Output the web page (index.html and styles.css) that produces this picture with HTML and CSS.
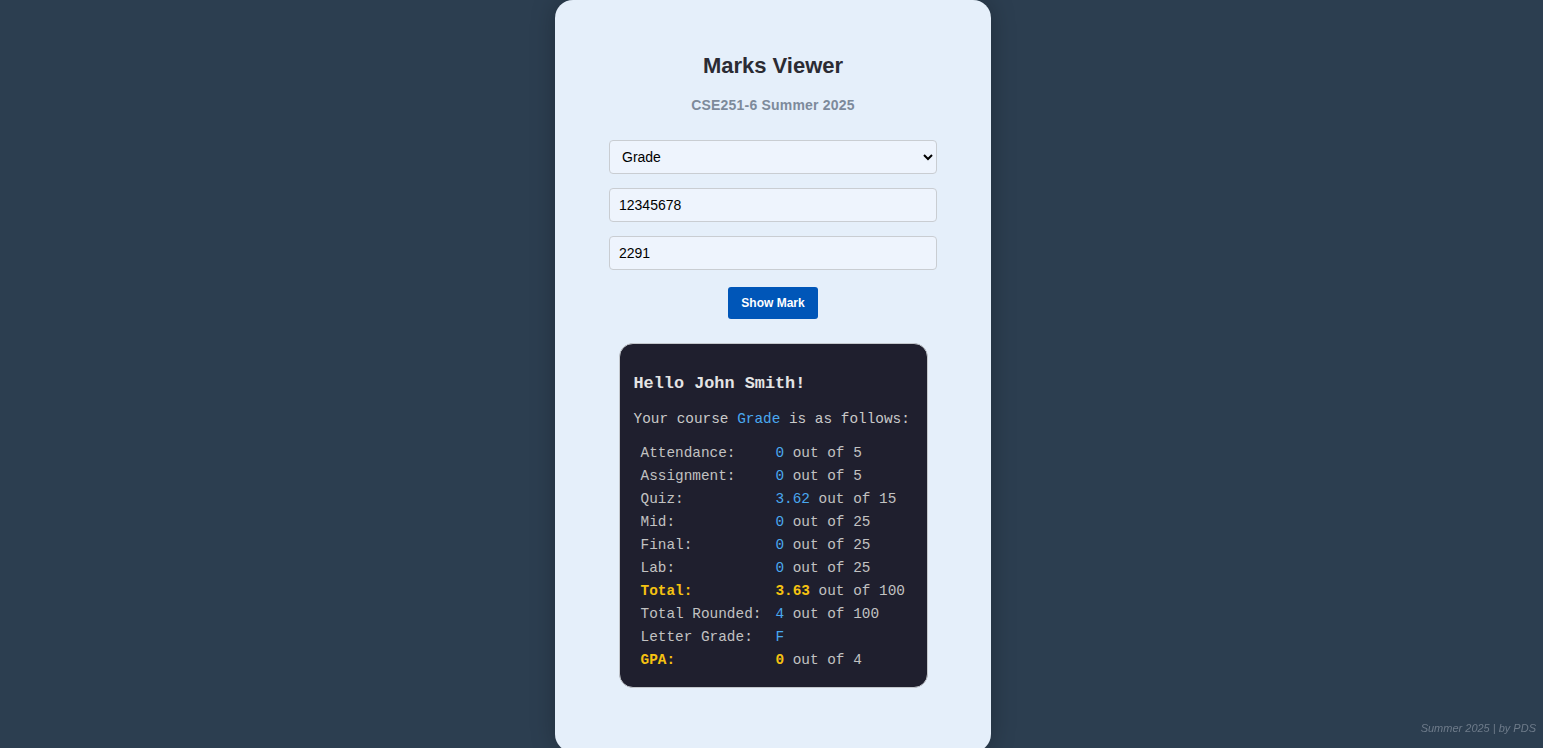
FILE: index.html
```html
<!DOCTYPE html>
<html lang="en">
<head>
<meta charset="utf-8">
<title>Marks Viewer</title>
<link rel="stylesheet" href="styles.css">
</head>
<body>
<main class="card">
  <h1 class="title">Marks Viewer</h1>
  <p class="subtitle">CSE251-6 Summer 2025</p>
  <form class="form">
    <select class="field field-select">
      <option>Grade</option>
    </select>
    <input class="field" type="text" value="12345678">
    <input class="field" type="text" value="2291">
    <button class="btn" type="button">Show Mark</button>
  </form>
  <section class="result">
    <h3 class="hello">Hello John Smith!</h3>
    <p class="intro">Your course <span class="blue">Grade</span> is as follows:</p>
    <table class="marks">
      <tr><td class="lbl">Attendance:</td><td><span class="blue">0</span> out of 5</td></tr>
      <tr><td class="lbl">Assignment:</td><td><span class="blue">0</span> out of 5</td></tr>
      <tr><td class="lbl">Quiz:</td><td><span class="blue">3.62</span> out of 15</td></tr>
      <tr><td class="lbl">Mid:</td><td><span class="blue">0</span> out of 25</td></tr>
      <tr><td class="lbl">Final:</td><td><span class="blue">0</span> out of 25</td></tr>
      <tr><td class="lbl">Lab:</td><td><span class="blue">0</span> out of 25</td></tr>
      <tr><td class="lbl gold">Total:</td><td><span class="gold">3.63</span> out of 100</td></tr>
      <tr><td class="lbl">Total Rounded:</td><td><span class="blue">4</span> out of 100</td></tr>
      <tr><td class="lbl">Letter Grade:</td><td><span class="blue">F</span></td></tr>
      <tr><td class="lbl gold">GPA:</td><td><span class="gold">0</span> out of 4</td></tr>
    </table>
  </section>
</main>
<footer class="footer">Summer 2025 | by PDS</footer>
</body>
</html>
```
FILE: styles.css
```css
html, body {
  margin: 0;
  padding: 0;
}
body {
  background: #2c3e50;
  font-family: "Liberation Sans", Arial, sans-serif;
  height: 748px;
  overflow: hidden;
}
.card {
  width: 436px;
  box-sizing: border-box;
  margin: 0 0 0 calc(50% - 216.5px);
  height: 752px;
  background: #e5effa;
  border-radius: 18px;
  padding: 53px 54px 0;
  box-shadow: 0 0 24px rgba(0, 0, 0, 0.25);
  display: flex;
  flex-direction: column;
  align-items: center;
}
.title {
  margin: 0;
  font-size: 22px;
  line-height: 25px;
  font-weight: bold;
  color: #2b2b33;
}
.subtitle {
  margin: 19px 0 27px;
  font-size: 14px;
  line-height: 16px;
  font-weight: bold;
  color: #7d8a9b;
  letter-spacing: 0.2px;
}
.form {
  width: 100%;
  display: flex;
  flex-direction: column;
  align-items: center;
  gap: 14px;
}
.field {
  width: 100%;
  height: 34px;
  box-sizing: border-box;
  border: 1px solid #c9cdd2;
  border-radius: 4px;
  background: #eef4fd;
  font-family: "Liberation Sans", Arial, sans-serif;
  font-size: 14px;
  color: #000;
  padding: 0 9px;
  outline: none;
}
.field-select {
  padding: 0 8px;
}
.btn {
  margin-top: 3px;
  width: 90px;
  height: 32px;
  border: none;
  border-radius: 3px;
  background: #0056b8;
  color: #fff;
  font-family: "Liberation Sans", Arial, sans-serif;
  font-size: 12px;
  font-weight: bold;
}
.result {
  margin-top: 24px;
  width: 309px;
  height: 345px;
  box-sizing: border-box;
  background: #1f1f2e;
  border: 1px solid #c3c7cc;
  border-radius: 14px;
  padding: 14px 14px;
  font-family: "Liberation Mono", "Courier New", monospace;
  font-size: 14.4px;
  color: #c9c9c9;
}
.hello {
  margin: 16px 0 18px;
  font-size: 16.85px;
  line-height: 19px;
  font-weight: bold;
  color: #e4e4e4;
}
.intro {
  margin: 0 0 13px;
  line-height: 17px;
}
.marks {
  border-spacing: 2px;
  font-size: 14.4px;
  color: #c2c2c2;
}
.marks td {
  padding: 3px 5px;
  line-height: 15px;
  white-space: nowrap;
}
.marks td.lbl {
  padding-right: 7px;
}
.blue {
  color: #4aa8f0;
}
.gold {
  color: #f5c211;
  font-weight: bold;
}
.footer {
  position: fixed;
  right: 7px;
  bottom: 14px;
  font-size: 11px;
  font-style: italic;
  color: #6e7b8a;
}
```
